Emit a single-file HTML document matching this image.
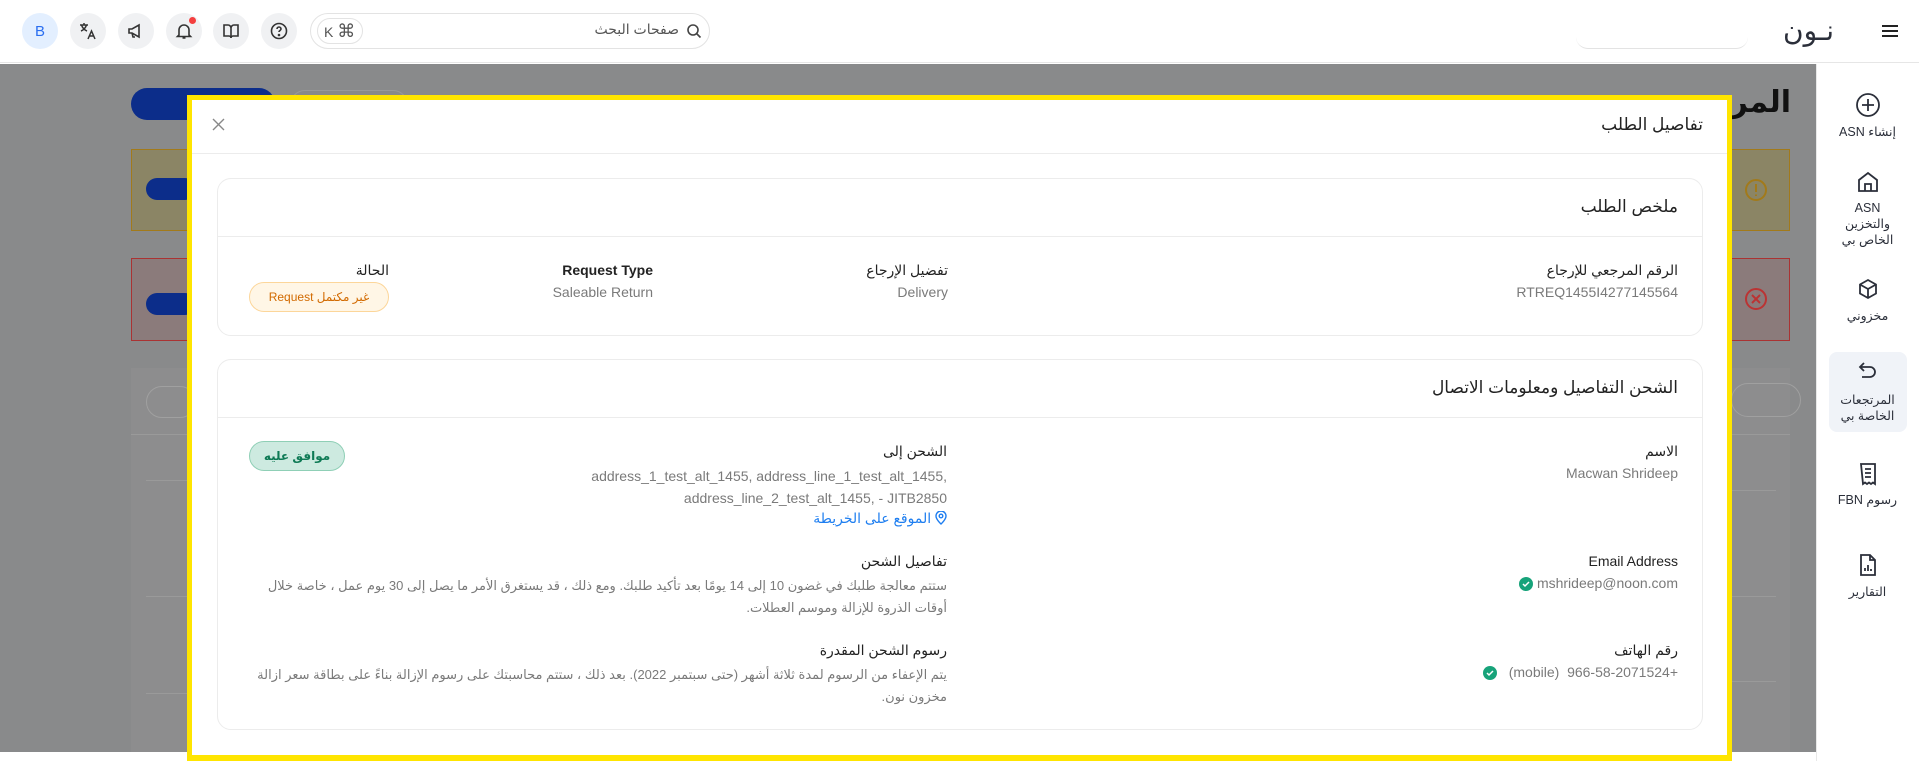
<!DOCTYPE html>
<html><head><meta charset="utf-8">
<style>
*{box-sizing:border-box;margin:0;padding:0}
body{width:1919px;height:761px;overflow:hidden;background:#fff;font-family:"Liberation Sans","DejaVu Sans",sans-serif;position:relative;color:#222}
.a{position:absolute}
.r{direction:rtl;text-align:right;white-space:nowrap}
.ic{position:absolute;width:36px;height:36px;border-radius:50%;background:#f0f1f3;top:13px;display:flex;align-items:center;justify-content:center}
.lbl{font-size:14px;color:#222}
.val{font-size:14px;color:#7a7a7a}
.sb{position:absolute;left:1816px;width:103px;text-align:center;font-size:12.5px;color:#2b2f3a;direction:rtl;line-height:16px}
</style></head><body>
<div class="a" style="left:0;top:0;width:1919px;height:63px;border-bottom:1px solid #e6e6e6;background:#fff"></div>
<div class="ic" style="left:22px;background:#e3efff;color:#2a6ef0;font-size:15px">B</div>
<div class="ic" style="left:70px"><svg width="20" height="20" viewBox="0 0 20 20" fill="none" stroke="#333" stroke-width="1.5"><path d="M2 4h8M6 2v2M3.5 4c1 3 3 5 5.5 6M8.5 4c-1 3-3 5-5.5 6"/><path d="M10 18l3.5-8 3.5 8M11.3 15h4.4"/></svg></div>
<div class="ic" style="left:118px"><svg width="18" height="18" viewBox="0 0 18 18" fill="none" stroke="#333" stroke-width="1.6"><path d="M2 7h3l7-4v12l-7-4H2z M5 11l1 4h2"/></svg></div>
<div class="ic" style="left:166px"><svg width="18" height="18" viewBox="0 0 18 18" fill="none" stroke="#333" stroke-width="1.6"><path d="M4 13V8a5 5 0 0110 0v5l1.5 1.5h-13z M7.5 16h3"/></svg><div class="a" style="left:23px;top:4px;width:7px;height:7px;border-radius:50%;background:#f43f3f"></div></div>
<div class="ic" style="left:213px"><svg width="18" height="18" viewBox="0 0 18 18" fill="none" stroke="#333" stroke-width="1.6"><path d="M2 3h4a3 3 0 013 3v10a2 2 0 00-2-2H2z M16 3h-4a3 3 0 00-3 3v10a2 2 0 012-2h5z"/></svg></div>
<div class="ic" style="left:261px"><svg width="18" height="18" viewBox="0 0 18 18" fill="none" stroke="#333" stroke-width="1.6"><circle cx="9" cy="9" r="7.5"/><path d="M7 7a2 2 0 114 0c0 1.5-2 1.5-2 3"/><circle cx="9" cy="13" r=".5" fill="#333"/></svg></div>
<div class="a" style="left:310px;top:13px;width:400px;height:36px;border:1px solid #e3e3e3;border-radius:18px"></div>
<div class="a" style="left:317px;top:18px;width:46px;height:26px;border:1px solid #e3e3e3;border-radius:13px;font-size:14px;color:#555;line-height:24px;padding-left:6px">K <span style="font-size:18px">⌘</span></div>
<div class="a r" style="right:1240px;top:21px;font-size:14px;color:#555">صفحات البحث</div>
<svg class="a" style="left:686px;top:23px" width="16" height="16" viewBox="0 0 16 16" fill="none" stroke="#444" stroke-width="1.6"><circle cx="7" cy="7" r="5"/><path d="M11 11l3.5 3.5"/></svg>
<div class="a" style="left:1576px;top:30px;width:172px;height:19px;border-bottom:1px solid #e3e3e3;border-radius:0 0 12px 12px"></div>
<div class="a r" style="left:1783px;top:14px;font-size:28px;color:#2b2f3a;font-family:'DejaVu Sans',sans-serif;line-height:34px">نـون</div>
<svg class="a" style="left:1882px;top:24px" width="16" height="14" viewBox="0 0 16 14" stroke="#222" stroke-width="2"><path d="M0 2h16M0 7h16M0 12h16"/></svg>
<div class="a" style="left:1816px;top:64px;width:103px;height:697px;background:#fff;border-left:1px solid #e8e8e8"></div>
<svg class="a" style="left:1855px;top:92px" width="26" height="26" viewBox="0 0 26 26" fill="none" stroke="#2b2f3a" stroke-width="1.8"><circle cx="13" cy="13" r="11"/><path d="M13 7v12M7 13h12"/></svg>
<div class="sb" style="top:124px">إنشاء ASN</div>
<svg class="a" style="left:1857px;top:171px" width="22" height="22" viewBox="0 0 22 22" fill="none" stroke="#2b2f3a" stroke-width="1.8"><path d="M2 20V9l9-7 9 7v11z M8 20v-7h6v7"/></svg>
<div class="sb" style="top:200px">ASN<br>والتخزين<br>الخاص بي</div>
<svg class="a" style="left:1857px;top:278px" width="22" height="22" viewBox="0 0 22 22" fill="none" stroke="#2b2f3a" stroke-width="1.8"><path d="M11 2l8 4.5v9L11 20l-8-4.5v-9z M3 6.5l8 4.5 8-4.5 M11 11v9"/></svg>
<div class="sb" style="top:308px">مخزوني</div>
<div class="a" style="left:1829px;top:352px;width:78px;height:80px;background:#f0f3f8;border-radius:8px"></div>
<svg class="a" style="left:1858px;top:362px" width="20" height="18" viewBox="0 0 20 18" fill="none" stroke="#2b2f3a" stroke-width="1.8"><path d="M6 1L2 5l4 4 M2 5h10a5 5 0 010 10H4"/></svg>
<div class="sb" style="top:392px">المرتجعات<br>الخاصة بي</div>
<svg class="a" style="left:1858px;top:462px" width="20" height="24" viewBox="0 0 20 24" fill="none" stroke="#2b2f3a" stroke-width="1.8"><path d="M3 2h14v20l-2-1.5-2 1.5-2-1.5-2 1.5-2-1.5-2 1.5z M7 7h6M7 11h6M7 15h6"/></svg>
<div class="sb" style="top:492px">رسوم FBN</div>
<svg class="a" style="left:1858px;top:553px" width="20" height="24" viewBox="0 0 20 24" fill="none" stroke="#2b2f3a" stroke-width="1.8"><path d="M3 2h9l5 5v15H3z M12 2v5h5 M7 18v-3M10 18v-6M13 18v-2"/></svg>
<div class="sb" style="top:584px">التقارير</div>
<div class="a" style="left:0;top:64px;width:1816px;height:688px;background:#898a8b"></div>
<div class="a" style="left:131px;top:88px;width:144px;height:32px;border-radius:16px;background:#0c2d8a"></div>
<div class="a" style="left:290px;top:90px;width:118px;height:30px;border-radius:15px;border:1px solid #9a9a9a"></div>
<div class="a" style="left:131px;top:149px;width:60px;height:82px;background:#8b8565;border:1px solid #a27a1a"></div>
<div class="a" style="left:146px;top:178px;width:50px;height:22px;border-radius:11px;background:#0c2d8a"></div>
<div class="a" style="left:131px;top:258px;width:60px;height:83px;background:#8b7b7b;border:1px solid #a33"></div>
<div class="a" style="left:146px;top:293px;width:50px;height:22px;border-radius:11px;background:#0c2d8a"></div>
<div class="a" style="left:131px;top:368px;width:60px;height:384px;background:#8d8d8e"></div>
<div class="a" style="left:146px;top:386px;width:50px;height:32px;border-radius:16px;border:1px solid #a0a0a0"></div>
<div class="a" style="left:131px;top:434px;width:60px;height:1px;background:#9a9a9a"></div>
<div class="a" style="left:146px;top:480px;width:45px;height:1px;background:#9a9a9a"></div>
<div class="a" style="left:146px;top:596px;width:45px;height:1px;background:#9a9a9a"></div>
<div class="a" style="left:146px;top:693px;width:45px;height:1px;background:#9a9a9a"></div>
<div class="a r" style="right:128px;top:85px;font-size:30px;color:#111;font-family:'DejaVu Sans',sans-serif;font-weight:bold">المر</div>
<div class="a" style="left:1731px;top:149px;width:59px;height:82px;background:#8b8565;border:1px solid #a27a1a"></div>
<svg class="a" style="left:1744px;top:178px" width="24" height="24" viewBox="0 0 24 24" fill="none" stroke="#a27a1a" stroke-width="2"><circle cx="12" cy="12" r="10"/><path d="M12 6v8M12 16.5v1.5"/></svg>
<div class="a" style="left:1731px;top:258px;width:59px;height:83px;background:#8b7b7b;border:1px solid #a33"></div>
<svg class="a" style="left:1744px;top:287px" width="24" height="24" viewBox="0 0 24 24" fill="none" stroke="#b33" stroke-width="2"><circle cx="12" cy="12" r="10"/><path d="M8 8l8 8M16 8l-8 8"/></svg>
<div class="a" style="left:1731px;top:368px;width:59px;height:384px;background:#8d8d8e"></div>
<div class="a" style="left:1731px;top:383px;width:70px;height:34px;border-radius:17px;border:1px solid #a0a0a0"></div>
<div class="a" style="left:1731px;top:434px;width:59px;height:1px;background:#9a9a9a"></div>
<div class="a" style="left:1731px;top:490px;width:45px;height:1px;background:#9a9a9a"></div>
<div class="a" style="left:1731px;top:596px;width:45px;height:1px;background:#9a9a9a"></div>
<div class="a" style="left:1731px;top:681px;width:45px;height:1px;background:#9a9a9a"></div>
<div class="a" style="left:187px;top:95px;width:1545px;height:666px;background:#fff;border:5px solid #ffe500;border-bottom-width:6px"></div>
<div class="a" style="left:192px;top:153px;width:1535px;height:1px;background:#ececec"></div>
<svg class="a" style="left:212px;top:118px" width="13" height="13" viewBox="0 0 13 13" stroke="#888" stroke-width="1.4"><path d="M1 1l11 11M12 1L1 12"/></svg>
<div class="a r" style="right:216px;top:115px;font-size:17px;color:#222">تفاصيل الطلب</div>
<div class="a" style="left:217px;top:178px;width:1486px;height:158px;border:1px solid #ececec;border-radius:14px"></div>
<div class="a" style="left:218px;top:236px;width:1484px;height:1px;background:#ececec"></div>
<div class="a r" style="right:241px;top:197px;font-size:17px;color:#222">ملخص الطلب</div>
<div class="a r lbl" style="right:241px;top:262px">الرقم المرجعي للإرجاع</div>
<div class="a r val" style="right:241px;top:284px">RTREQ1455I4277145564</div>
<div class="a r lbl" style="right:971px;top:262px">تفضيل الإرجاع</div>
<div class="a r val" style="right:971px;top:284px">Delivery</div>
<div class="a r lbl" style="right:1266px;top:262px;font-weight:bold">Request Type</div>
<div class="a r val" style="right:1266px;top:284px">Saleable Return</div>
<div class="a r lbl" style="right:1530px;top:262px">الحالة</div>
<div class="a" style="left:249px;top:282px;width:140px;height:30px;border-radius:15px;background:#fff6e6;border:1px solid #fcd69a;color:#d26a00;font-size:12px;text-align:center;line-height:28px;direction:rtl">غير مكتمل Request</div>
<div class="a" style="left:217px;top:359px;width:1486px;height:371px;border:1px solid #ececec;border-radius:14px"></div>
<div class="a" style="left:218px;top:417px;width:1484px;height:1px;background:#ececec"></div>
<div class="a r" style="right:241px;top:378px;font-size:17px;color:#222">الشحن التفاصيل ومعلومات الاتصال</div>
<div class="a r lbl" style="right:241px;top:443px">الاسم</div>
<div class="a r val" style="right:241px;top:465px">Macwan Shrideep</div>
<div class="a r lbl" style="right:241px;top:553px">Email Address</div>
<div class="a r val" style="right:241px;top:575px">mshrideep@noon.com</div>
<svg class="a" style="left:1519px;top:577px" width="14" height="14" viewBox="0 0 14 14"><circle cx="7" cy="7" r="7" fill="#17a37a"/><path d="M4 7l2 2 4-4" stroke="#fff" stroke-width="1.5" fill="none"/></svg>
<div class="a r lbl" style="right:241px;top:642px">رقم الهاتف</div>
<div class="a r val" style="right:241px;top:664px"><span dir="ltr">(mobile)&nbsp; 966-58-2071524+</span></div>
<svg class="a" style="left:1483px;top:666px" width="14" height="14" viewBox="0 0 14 14"><circle cx="7" cy="7" r="7" fill="#17a37a"/><path d="M4 7l2 2 4-4" stroke="#fff" stroke-width="1.5" fill="none"/></svg>
<div class="a r lbl" style="right:972px;top:443px">الشحن إلى</div>
<div class="a r val" style="right:972px;top:465px;line-height:22px"><span dir="ltr">address_1_test_alt_1455, address_line_1_test_alt_1455,</span><br><span dir="ltr">address_line_2_test_alt_1455, - JITB2850</span></div>
<div class="a r" style="right:972px;top:510px;font-size:14px;color:#1e7ef0">
<svg width="12" height="14" viewBox="0 0 12 14" fill="none" stroke="#1e7ef0" stroke-width="1.4" style="vertical-align:-2px"><path d="M6 13s5-4.5 5-8a5 5 0 00-10 0c0 3.5 5 8 5 8z"/><circle cx="6" cy="5" r="1.8"/></svg> الموقع على الخريطة</div>
<div class="a" style="left:249px;top:441px;width:96px;height:30px;border-radius:15px;background:#cdeae0;border:1px solid #8fcfb6;color:#0e7a55;font-size:12px;font-weight:bold;text-align:center;line-height:28px;direction:rtl">موافق عليه</div>
<div class="a r lbl" style="right:972px;top:553px">تفاصيل الشحن</div>
<div class="a r val" style="right:972px;top:575px;line-height:22px;width:706px;white-space:normal;font-size:13px">ستتم معالجة طلبك في غضون 10 إلى 14 يومًا بعد تأكيد طلبك. ومع ذلك ، قد يستغرق الأمر ما يصل إلى 30 يوم عمل ، خاصة خلال أوقات الذروة للإزالة وموسم العطلات.</div>
<div class="a r lbl" style="right:972px;top:642px">رسوم الشحن المقدرة</div>
<div class="a r val" style="right:972px;top:664px;line-height:22px;width:706px;white-space:normal;font-size:13px">يتم الإعفاء من الرسوم لمدة ثلاثة أشهر (حتى سبتمبر 2022). بعد ذلك ، ستتم محاسبتك على رسوم الإزالة بناءً على بطاقة سعر ازالة مخزون نون.</div>
</body></html>
